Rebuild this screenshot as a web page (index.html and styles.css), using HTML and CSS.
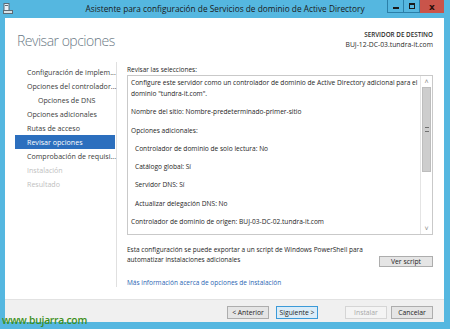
FILE: index.html
```html
<!DOCTYPE html>
<html lang="es">
<head>
  <meta charset="UTF-8" />
  <title>Asistente para configuración de Servicios de dominio de Active Directory</title>
  <link rel="stylesheet" href="styles.css">
</head>
<body>
  <div class="window">
    <div class="titlebar">
      <svg class="app-icon" width="10" height="11" viewBox="0 0 10 11">
        <rect x="1" y="0.5" width="5" height="7" fill="#e8f2f8" stroke="#5d6b75" stroke-width="1"/>
        <rect x="2" y="2" width="3" height="1" fill="#5d6b75"/>
        <rect x="0.5" y="7.5" width="9" height="3" fill="#d8e2e8" stroke="#5d6b75" stroke-width="1"/>
      </svg>
      <div class="title">Asistente para configuración de Servicios de dominio de Active Directory</div>
      <div class="controls">
        <span class="ctl ctl-min"><i></i></span>
        <span class="ctl ctl-max"><i></i></span>
        <span class="ctl ctl-close">x</span>
      </div>
    </div>

    <div class="client">
      <div class="header">
        <h1>Revisar opciones</h1>
        <div class="target">
          <div class="target-label">SERVIDOR DE DESTINO</div>
          <div>BUJ-12-DC-03.tundra-it.com</div>
        </div>
      </div>

      <div class="content">
        <nav class="steps">
          <a>Configuración de implem...</a>
          <a>Opciones del controlador...</a>
          <a class="sub">Opciones de DNS</a>
          <a>Opciones adicionales</a>
          <a>Rutas de acceso</a>
          <a class="active">Revisar opciones</a>
          <a>Comprobación de requisi...</a>
          <a class="disabled">Instalación</a>
          <a class="disabled">Resultado</a>
        </nav>

        <div class="main">
          <div class="label">Revisar las selecciones:</div>
          <div class="review">
            <div class="review-text">
              <p>Configure este servidor como un controlador de dominio de Active Directory adicional para el dominio "tundra-it.com".</p>
              <p>Nombre del sitio: Nombre-predeterminado-primer-sitio</p>
              <p>Opciones adicionales:</p>
              <p class="indent">Controlador de dominio de solo lectura: No</p>
              <p class="indent">Catálogo global: Sí</p>
              <p class="indent">Servidor DNS: Sí</p>
              <p class="indent">Actualizar delegación DNS: No</p>
              <p>Controlador de dominio de origen: BUJ-03-DC-02.tundra-it.com</p>
            </div>
            <div class="scrollbar">
              <div class="arrow">&#708;</div>
              <div class="thumb"><i></i></div>
              <div class="track"></div>
              <div class="arrow">&#709;</div>
            </div>
          </div>

          <div class="export">
            <div class="export-text">Esta configuración se puede exportar a un script de Windows PowerShell para<br>automatizar instalaciones adicionales</div>
            <button class="btn btn-script">Ver script</button>
          </div>

          <a class="more">Más información acerca de opciones de instalación</a>
        </div>
      </div>

      <div class="footer">
        <button class="btn">&lt; Anterior</button>
        <button class="btn btn-default">Siguiente &gt;</button>
        <button class="btn btn-disabled">Instalar</button>
        <button class="btn">Cancelar</button>
      </div>
    </div>
  </div>
  <div class="watermark">www.bujarra.com</div>
</body>
</html>
```

FILE: styles.css
```css
body {
  margin: 0;
  width: 450px;
  height: 329px;
  overflow: hidden;
  font-family: 'Open Sans', sans-serif;
  color: #1e1e1e;
  position: relative;
}
.window {
  height: 329px;
  background: #55b7e0;
  display: flex;
  flex-direction: column;
  box-sizing: border-box;
}
.titlebar {
  height: 18px;
  display: flex;
  align-items: flex-start;
  position: relative;
}
.app-icon {
  margin: 3px 0 0 3px;
}
.title {
  position: absolute;
  left: 0;
  right: 0;
  top: 2px;
  text-align: center;
  font-size: 8.3px;
  line-height: 14px;
  color: #1a1a1a;
}
.controls {
  margin-left: auto;
  margin-right: 6px;
  display: flex;
  z-index: 1;
}
.ctl {
  height: 13px;
  display: flex;
  align-items: center;
  justify-content: center;
  border: 1px solid #2b7fa8;
  border-top: none;
  box-sizing: border-box;
}
.ctl-min {
  width: 17px;
}
.ctl-min i {
  width: 6px;
  height: 2px;
  margin-top: 3px;
  background: #1a1a1a;
}
.ctl-max {
  width: 16px;
  border-left: none;
}
.ctl-max i {
  width: 4px;
  height: 3px;
  border: 1px solid #1a1a1a;
  border-top-width: 2px;
}
.ctl-close {
  width: 24px;
  border: none;
  background: #c9544a;
  color: #2a0f0b;
  font-size: 9px;
  font-weight: 700;
  font-family: 'DejaVu Sans', sans-serif;
}
.client {
  flex: 1;
  margin: 0 6px 7px 5px;
  background: #fff;
  display: flex;
  flex-direction: column;
  font-size: 6.5px;
}
.header {
  height: 44px;
  display: flex;
  justify-content: space-between;
  align-items: flex-start;
  box-sizing: border-box;
  padding: 0 11px 0 12px;
}
h1 {
  margin: 12px 0 0 0;
  font-size: 14px;
  line-height: 22px;
  font-weight: 300;
  letter-spacing: -0.5px;
  color: #6b7a86;
}
.target {
  margin-top: 12px;
  text-align: right;
  line-height: 9.5px;
  color: #2a2a2a;
  font-size: 6.8px;
}
.target-label {
  font-weight: 600;
  font-size: 6.3px;
}
.content {
  flex: 1;
  display: flex;
}
.steps {
  width: 111px;
  margin-bottom: 12px;
  padding-top: 3px;
  border-right: 1px solid #e0e0e0;
  display: flex;
  flex-direction: column;
  font-size: 7.1px;
}
.steps a {
  height: 14px;
  line-height: 14px;
  margin: 0 1px 0 10px;
  padding-left: 12px;
  color: #3a3a3a;
  white-space: nowrap;
}
.steps a.sub {
  padding-left: 23px;
}
.steps a.active {
  background: #2c6fbe;
  color: #fff;
}
.steps a.disabled {
  color: #c0c0c0;
}
.main {
  flex: 1;
  padding: 3px 11px 0 10px;
  display: flex;
  flex-direction: column;
}
.label {
  line-height: 10px;
  margin-bottom: 0;
}
.review {
  height: 160px;
  border: 1px solid #c9c9c9;
  box-sizing: border-box;
  display: flex;
}
.review-text {
  flex: 1;
  padding: 1px 2px 1px 3px;
  line-height: 11px;
  font-size: 6.6px;
}
.review-text p {
  margin: 0 0 7.3px 0;
}
.review-text p.indent {
  padding-left: 4px;
}
.scrollbar {
  width: 11px;
  border-left: 1px solid #e4e4e4;
  display: flex;
  flex-direction: column;
}
.scrollbar .arrow {
  height: 11px;
  line-height: 11px;
  text-align: center;
  font-size: 7px;
  color: #8a8a8a;
}
.thumb {
  height: 83px;
  margin: 0 1px;
  background: #cdcdcd;
  border: 1px solid #bdbdbd;
  display: flex;
  align-items: center;
  justify-content: center;
}
.thumb i {
  width: 4px;
  height: 3px;
  border-top: 1px solid #707070;
  border-bottom: 1px solid #707070;
}
.track {
  flex: 1;
}
.export {
  margin-top: 10px;
  display: flex;
  justify-content: space-between;
  align-items: flex-end;
}
.export-text {
  line-height: 9.6px;
  white-space: nowrap;
}
.btn {
  height: 13px;
  width: 42px;
  padding: 0;
  font-family: 'Open Sans', sans-serif;
  font-size: 6.8px;
  line-height: 11px;
  color: #1e1e1e;
  background: #e5e5e5;
  border: 1px solid #adadad;
  box-sizing: border-box;
}
.btn-script {
  width: 54px;
  height: 11px;
  line-height: 9px;
  margin-bottom: -3px;
}
.more {
  margin-top: 14px;
  line-height: 10px;
  color: #2a66b3;
}
.footer {
  height: 23px;
  border-top: 1px solid #e2e2e2;
  background: #f0f0f0;
  box-sizing: border-box;
  display: flex;
  justify-content: flex-end;
  align-items: flex-start;
  padding: 6px 11px 0 0;
  gap: 4px;
}
.btn-default {
  background: #dbecf8;
  border-color: #3b9ad8;
  margin: 0 23px 0 3px;
}
.btn-disabled {
  background: #f4f4f4;
  border-color: #d5d5d5;
  color: #a8a8a8;
}
.watermark {
  position: absolute;
  left: 2px;
  top: 313px;
  font-family: 'Open Sans', sans-serif;
  font-size: 10.4px;
  font-weight: 600;
  letter-spacing: -0.3px;
  line-height: 15px;
  color: #3d8f1c;
}
```
